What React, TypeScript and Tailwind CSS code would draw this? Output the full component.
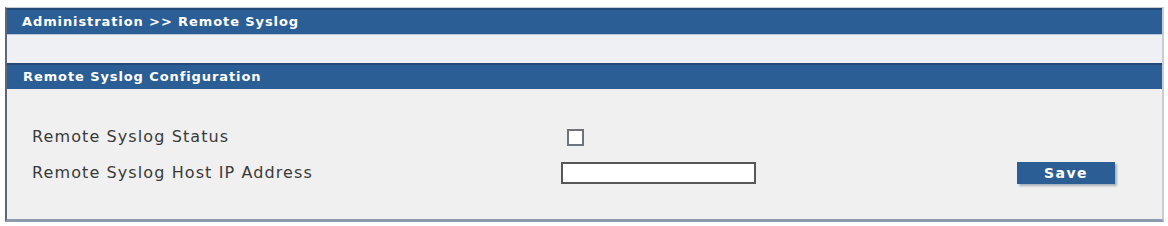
export default function App() {
  return (
    <div className="w-[1168px] h-[226px] bg-white pt-[7px] pl-[5px] font-['DejaVu_Sans',sans-serif]">
      <div className="w-[1159px] h-[215px] flex flex-col border-l-2 border-r-2 border-b-[3px] border-t border-l-[#5f6675] border-r-[#c9ccd4] border-b-[#8e9ab0] border-t-[#c7ccd6] bg-[#f0f0f0]">
        <div className="h-[26px] flex items-center pl-[15px] bg-[#2b5e95] border-t-2 border-[#23487a] text-white font-bold text-[13px] tracking-[0.9px]">
          Administration &gt;&gt; Remote Syslog
        </div>
        <div className="h-[29px] bg-[#eef0f4] border-t border-[#b9c7da]" />
        <div className="h-[26px] flex items-center pl-[16px] bg-[#2b5e95] border-t-2 border-[#23487a] text-white font-bold text-[13px] tracking-[0.9px]">
          Remote Syslog Configuration
        </div>
        <div className="flex-1 pt-[30px] pl-[25px] text-[16px] tracking-[1.1px] text-[#3a3a3a]">
          <div className="h-[36px] flex items-center">
            <span className="w-[529px]">Remote Syslog Status</span>
            <div className="ml-[6px] w-[17px] h-[17px] border-2 border-[#6f737a] bg-white" />
          </div>
          <div className="h-[36px] flex items-center">
            <span className="w-[529px]">Remote Syslog Host IP Address</span>
            <div className="w-[195px] h-[22px] border-2 border-[#575757] bg-white" />
            <button className="ml-[261px] w-[98px] h-[22px] bg-[#2b5e95] text-white font-bold text-[14px] tracking-[1.5px] shadow-[2px_2px_2px_#a9b0bb]">
              Save
            </button>
          </div>
        </div>
      </div>
    </div>
  );
}
